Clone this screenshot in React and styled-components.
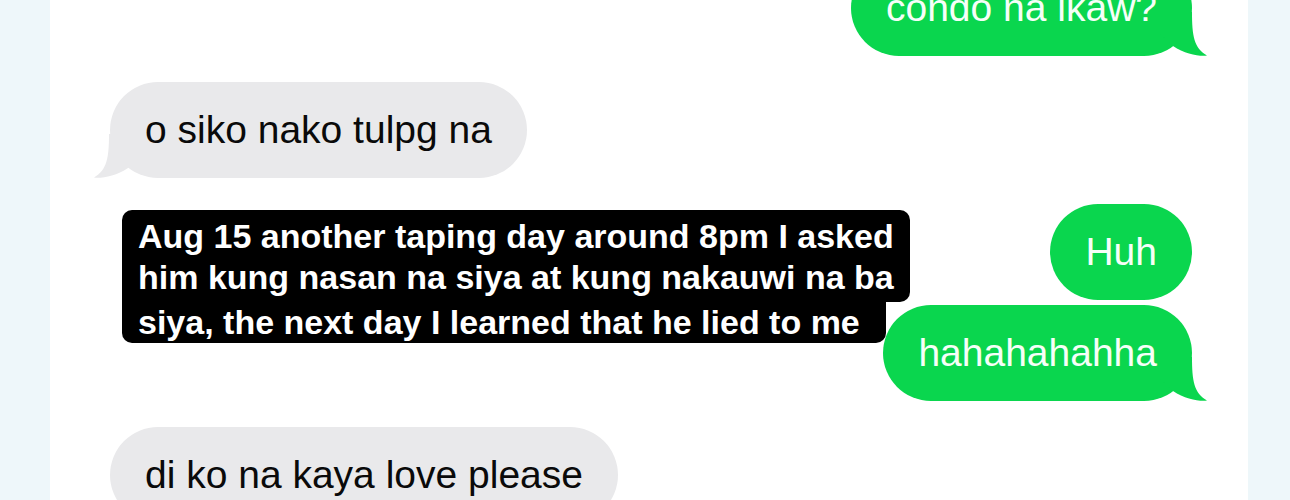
import React from "react";
import styled, { createGlobalStyle } from "styled-components";

const GlobalStyle = createGlobalStyle`
  html, body {
    margin: 0;
    padding: 0;
    background: #eef7fa;
  }
  body {
    font-family: "Liberation Sans", Arial, sans-serif;
  }
`;

const GREEN = "#0ad64e";
const GRAY = "#e9e9eb";

export default function App() {
  return (
    <>
      <GlobalStyle />
      <Page>
        <Panel>
          <Thread>
            <Row $me>
              <Bubble $me>
                condo na ikaw?
                <Tail $me />
              </Bubble>
            </Row>
            <Row>
              <Bubble>
                o siko nako tulpg na
                <Tail />
              </Bubble>
            </Row>
            <Group>
              <Caption>
                <CaptionBlock>
                  Aug 15 another taping day around 8pm I asked
                  <br />
                  him kung nasan na siya at kung nakauwi na ba
                </CaptionBlock>
                <CaptionBlock $last>
                  siya, the next day I learned that he lied to me
                </CaptionBlock>
              </Caption>
              <Stack>
                <Bubble $me>Huh</Bubble>
                <Bubble $me>
                  hahahahahha
                  <Tail $me />
                </Bubble>
              </Stack>
            </Group>
            <Row>
              <Bubble>di ko na kaya love please</Bubble>
            </Row>
          </Thread>
        </Panel>
      </Page>
    </>
  );
}

// bubble tail, drawn for the right side and mirrored for the left
function Tail({ $me }) {
  return (
    <TailShape $me={$me} viewBox="0 0 50 44" width="50" height="44">
      <path
        d="M34 0 C34 24 36 36 49 43.6 C41 44.6 27 42 15 34 L0 20 L0 0 Z"
        fill={$me ? GREEN : GRAY}
      />
    </TailShape>
  );
}

const Page = styled.div`
  height: 500px;
  overflow: hidden;
  background: #eef7fa;
`;

const Panel = styled.div`
  margin-left: 50px;
  width: 1198px;
  height: 500px;
  overflow: hidden;
  background: #ffffff;
`;

const Thread = styled.div`
  display: flex;
  flex-direction: column;
  gap: 26px;
  margin-top: -40px;
  padding: 0 56px 0 60px;
`;

const Row = styled.div`
  display: flex;
  justify-content: ${(p) => (p.$me ? "flex-end" : "flex-start")};
`;

const Bubble = styled.div`
  position: relative;
  padding: 25px 35px;
  border-radius: 48px;
  font-size: 39px;
  line-height: 46px;
  white-space: nowrap;
  background: ${(p) => (p.$me ? GREEN : GRAY)};
  color: ${(p) => (p.$me ? "#f6fff8" : "#0a0a0a")};
`;

const TailShape = styled.svg`
  position: absolute;
  bottom: 0;
  ${(p) =>
    p.$me ? "right: -16px;" : "left: -17px; transform: scaleX(-1);"}
`;

const Group = styled.div`
  position: relative;
  display: flex;
  justify-content: flex-end;
`;

const Stack = styled.div`
  display: flex;
  flex-direction: column;
  align-items: flex-end;
  gap: 5px;
`;

const Caption = styled.div`
  position: absolute;
  left: 12px;
  top: 6px;
  z-index: 2;
  display: flex;
  flex-direction: column;
  align-items: flex-start;
  font-size: 34px;
  font-weight: 700;
  line-height: 41px;
  color: #ffffff;
  white-space: nowrap;
`;

const CaptionBlock = styled.div`
  background: #000000;
  padding: ${(p) => (p.$last ? "0 26px 0 16px" : "6px 16px 4px")};
  border-radius: ${(p) => (p.$last ? "0 0 10px 10px" : "10px 10px 10px 0")};
`;
